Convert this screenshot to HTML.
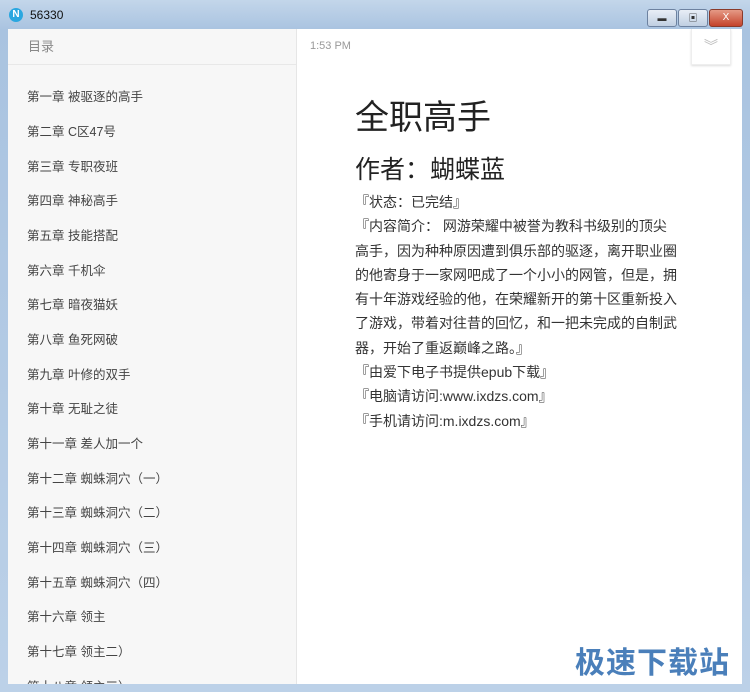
<!DOCTYPE html><html><head><meta charset="utf-8"><style>
body{margin:0;width:750px;height:692px;overflow:hidden;background:linear-gradient(#c3d6ea,#a9c3e0 30px,#bcd1e8);font-family:"Liberation Sans","Noto Sans CJK SC",sans-serif;position:relative}
.t{position:absolute;left:30px;top:8px;font-size:12px;color:#111}
.ic{position:absolute;left:9px;top:8px;width:14px;height:14px;border-radius:50%;background:#2aa7e0;color:#fff;font-size:10px;line-height:14px;text-align:center;font-weight:bold}
.btn{position:absolute;top:9px;height:16px;border:1px solid #6d82a0;border-radius:3px;background:linear-gradient(#e8eef6,#c0cfe2);text-align:center;font-size:9px;line-height:16px;color:#333}
.side{position:absolute;left:8px;top:29px;width:288px;height:655px;background:#f7f7f7;border-right:1px solid #e6e6e6;overflow:hidden}
.hd{height:35px;border-bottom:1px solid #e8e8e8;color:#888;font-size:13px;line-height:35px;padding-left:20px}
.side div.c{position:absolute;left:19px;font-size:12.5px;color:#444;margin-top:-2px}
.main{position:absolute;left:297px;top:29px;width:445px;height:655px;background:#fff;overflow:hidden}
.tm{position:absolute;left:13px;top:11px;font-size:11px;color:#999}
.dd{position:absolute;left:394px;top:0;width:38px;height:35px;border:1px solid #eee;border-top:none;box-shadow:0 1px 2px #ddd;color:#bbb;text-align:center;font-size:14px;line-height:35px}
h1{position:absolute;left:58px;top:61px;margin:0;font-size:34px;font-weight:normal;color:#222}
h2{position:absolute;left:58px;top:121px;margin:0;font-size:25px;font-weight:normal;color:#222}
.b{position:absolute;left:58px;top:161px;width:324px;font-size:14px;line-height:24.3px;color:#333}
.wm{position:absolute;left:575px;top:638px;font-size:30px;font-weight:bold;color:#4a7fba;letter-spacing:1px}
</style></head><body>
<div class="ic">N</div><div class="t">56330</div>
<div class="btn" style="left:647px;width:28px">▬</div>
<div class="btn" style="left:678px;width:28px">▣</div>
<div class="btn" style="left:709px;width:32px;background:linear-gradient(#e59a86,#c4432b);border-color:#8a3a2a;color:#fff;font-size:10px">X</div>
<div class="side"><div class="hd">目录</div>
<div class="c" style="top:59px">第一章 被驱逐的高手</div>
<div class="c" style="top:94px">第二章 C区47号</div>
<div class="c" style="top:129px">第三章 专职夜班</div>
<div class="c" style="top:163px">第四章 神秘高手</div>
<div class="c" style="top:198px">第五章 技能搭配</div>
<div class="c" style="top:233px">第六章 千机伞</div>
<div class="c" style="top:267px">第七章 暗夜猫妖</div>
<div class="c" style="top:302px">第八章 鱼死网破</div>
<div class="c" style="top:337px">第九章 叶修的双手</div>
<div class="c" style="top:371px">第十章 无耻之徒</div>
<div class="c" style="top:406px">第十一章 差人加一个</div>
<div class="c" style="top:441px">第十二章 蜘蛛洞穴（一）</div>
<div class="c" style="top:475px">第十三章 蜘蛛洞穴（二）</div>
<div class="c" style="top:510px">第十四章 蜘蛛洞穴（三）</div>
<div class="c" style="top:545px">第十五章 蜘蛛洞穴（四）</div>
<div class="c" style="top:579px">第十六章 领主</div>
<div class="c" style="top:614px">第十七章 领主二）</div>
<div class="c" style="top:649px">第十八章 领主三）</div>
</div>
<div class="main"><div class="tm">1:53 PM</div><div class="dd">︾</div>
<h1>全职高手</h1><h2>作者：蝴蝶蓝</h2>
<div class="b">『状态：已完结』<br>『内容简介： 网游荣耀中被誉为教科书级别的顶尖<br>高手，因为种种原因遭到俱乐部的驱逐，离开职业圈<br>的他寄身于一家网吧成了一个小小的网管，但是，拥<br>有十年游戏经验的他，在荣耀新开的第十区重新投入<br>了游戏，带着对往昔的回忆，和一把未完成的自制武<br>器，开始了重返巅峰之路。』<br>『由爱下电子书提供epub下载』<br>『电脑请访问:www.ixdzs.com』<br>『手机请访问:m.ixdzs.com』</div>
</div>
<div class="wm">极速下载站</div>
</body></html>
